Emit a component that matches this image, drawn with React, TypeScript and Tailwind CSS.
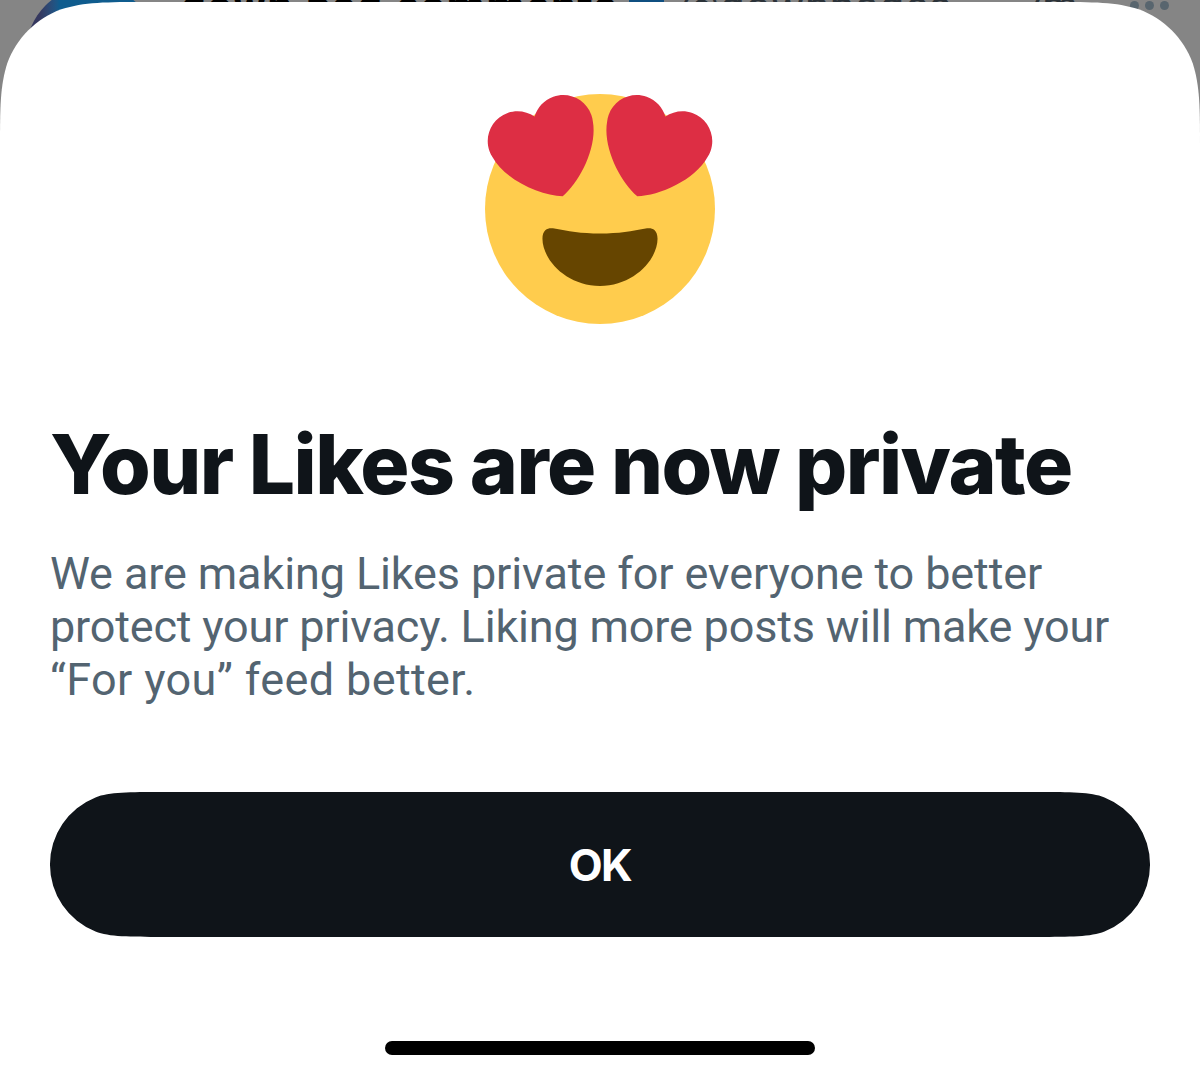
import type { ReactNode } from 'react';

const HEADLINE = 'Your Likes are now private';

const BODY_LINES = [
  { text: 'We are making Likes private for everyone to better', spacing: 'tracking-[-0.12px]' },
  { text: 'protect your privacy. Liking more posts will make your', spacing: 'tracking-[-0.18px]' },
  { text: '“For you” feed better.', spacing: 'tracking-[0.37px]' },
];

function HeartEyes() {
  return (
    <svg viewBox="0 0 36 36" className="h-[230px] w-[230px]" aria-hidden="true">
      <circle cx="18" cy="18" r="18" fill="#ffcc4d" />
      <path
        fill="#664500"
        d="M18 21.849c-2.966 0-4.935-.346-7.369-.819-.557-.106-1.638 0-1.638 1.638 0 3.275 3.763 7.369 9.007 7.369s9.007-4.094 9.007-7.369c0-1.638-1.082-1.745-1.638-1.638-2.434.473-4.402.819-7.369.819"
      />
      <path
        fill="#dd2e44"
        d="M16.65 3.281C15.791.85 13.126-.426 10.694.431c-1.476.52-2.521 1.711-2.928 3.104-1.191-.829-2.751-1.1-4.225-.58C1.111 3.813-.167 6.48.692 8.911c.122.344.284.663.472.958 1.951 3.582 7.588 6.1 11.001 6.131 2.637-2.167 5.446-7.665 4.718-11.677-.038-.348-.113-.698-.233-1.042zm2.7 0C20.209.85 22.875-.426 25.306.431c1.476.52 2.521 1.711 2.929 3.104 1.191-.829 2.751-1.1 4.225-.58 2.43.858 3.707 3.525 2.85 5.956-.123.344-.284.663-.473.958-1.951 3.582-7.588 6.1-11.002 6.131-2.637-2.167-5.445-7.665-4.717-11.677.037-.348.112-.698.232-1.042z"
      />
    </svg>
  );
}

// Dimmed post that peeks out above the sheet
function PostBehind() {
  return (
    <div className="absolute inset-x-0 top-0 h-32 overflow-hidden text-[44px] leading-[54px] whitespace-nowrap text-[#2b3238]">
      <div className="absolute top-[-14px] left-[26px] h-[133px] w-[133px] rounded-full bg-linear-to-r from-[#35385f] from-10% to-[#0f5c8e] to-25%" />
      <span className="absolute top-[-20px] left-[181px] font-bold tracking-[1.5px] text-black">down bad comments</span>
      <span className="absolute top-[-20px] left-[629px] h-[40px] w-[35px] rounded-full bg-[#0f4f80]" />
      <span className="absolute top-[-20px] left-[680px] tracking-[0.6px]">@downbadcs</span>
      <span className="absolute top-[-20px] left-[1010px]">·</span>
      <span className="absolute top-[-20px] left-[1022px] text-[40px] tracking-[-2px]">7m</span>
      <div className="absolute top-[1px] left-[1130px] flex gap-[6px]">
        <span className="h-[9px] w-[9px] rounded-full bg-[#58656e]" />
        <span className="h-[9px] w-[9px] rounded-full bg-[#58656e]" />
        <span className="h-[9px] w-[9px] rounded-full bg-[#58656e]" />
      </div>
    </div>
  );
}

function Sheet({ children }: { children: ReactNode }) {
  return (
    <div className="relative mt-[2px] flex h-[1075px] flex-col items-center bg-white px-[50px] [clip-path:path('M148.3_0C105.6_0_84.2_0_61.3_7.3C36.2_16.4_16.4_36.2_7.3_61.3C0_84.2_0_105.6_0_148.3V1075H1200V148.3C1200_105.6_1200_84.2_1192.7_61.3C1183.6_36.2_1163.8_16.4_1138.7_7.3C1115.8_0_1094.4_0_1051.7_0Z')]">
      {children}
    </div>
  );
}

export default function App() {
  return (
    <div className="relative h-[1077px] w-[1200px] overflow-hidden bg-[#858585] font-['Roboto','Liberation_Sans',sans-serif]">
      <PostBehind />
      <Sheet>
        <div className="mt-[92px] mr-px">
          <HeartEyes />
        </div>

        <h1 className="mt-[89px] w-full font-['Inter','Liberation_Sans',sans-serif] text-[82px] leading-[104px] font-extrabold tracking-[-1.6px] whitespace-nowrap text-[#0f1419]">
          {HEADLINE}
        </h1>

        <p className="mt-[30px] w-full text-[45px] leading-[53px] whitespace-nowrap text-[#536471]">
          {BODY_LINES.map((line) => (
            <span key={line.text} className={`block ${line.spacing}`}>
              {line.text}
            </span>
          ))}
        </p>

        <button
          type="button"
          className="mt-[86px] h-[145px] w-full bg-[#0f1419] font-['Inter','Liberation_Sans',sans-serif] text-[44px] font-bold tracking-[-1.5px] text-white [clip-path:path('M112_0C80_0_59_0_45.5_5.4A72.2_72.2_0_0_0_45.5_139.6C59_145_80_145_112_145H988C1020_145_1041_145_1054.5_139.6A72.2_72.2_0_0_0_1054.5_5.4C1041_0_1020_0_988_0Z')]"
        >
          OK
        </button>

        <div className="mt-[104px] h-[14px] w-[430px] rounded-full bg-black" />
      </Sheet>
    </div>
  );
}
